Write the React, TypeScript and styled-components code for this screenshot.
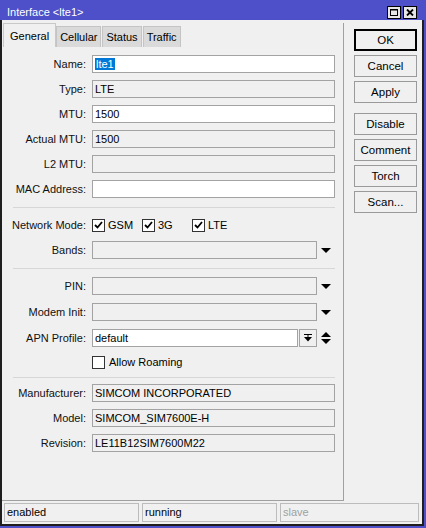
import React from "react";
import styled, { createGlobalStyle } from "styled-components";

const GlobalStyle = createGlobalStyle`
  html, body {
    margin: 0;
    padding: 0;
  }
  body {
    font-family: "Liberation Sans", Arial, sans-serif;
    font-size: 11px;
    color: #000;
    background: #f0f0f0;
  }
`;

const Window = styled.div`
  width: 426px;
  height: 528px;
  box-sizing: border-box;
  background: #4d50c8;
  padding: 0 2px 2px 0;
  display: flex;
  flex-direction: column;
`;

const TitleBar = styled.div`
  height: 20px;
  flex: none;
  display: flex;
  align-items: center;
  justify-content: space-between;
  padding: 0 7px;
  color: #fff;
  font-size: 11px;
`;

const Title = styled.span`
  padding-top: 3px;
`;

const TitleButtons = styled.div`
  display: flex;
  gap: 2px;
  align-self: flex-end;
  margin-bottom: 1px;
`;

const TitleButton = styled.div`
  width: 14px;
  height: 13px;
  box-sizing: border-box;
  border: 1px solid #000;
  background: #e6e6e6;
  display: flex;
  align-items: center;
  justify-content: center;
`;

const Body = styled.div`
  flex: 1;
  display: flex;
  flex-direction: column;
  background: #f0f0f0;
  border: 2px solid #1e1e1e;
  border-top: none;
`;

const Main = styled.div`
  flex: 1;
  display: flex;
  min-height: 0;
`;

const LeftPane = styled.div`
  width: 342px;
  flex: none;
  box-sizing: border-box;
  margin-top: 3px;
  border-right: 1px solid #a0a0a0;
  border-bottom: 1px solid #a0a0a0;
  display: flex;
  flex-direction: column;
`;

const TabStrip = styled.div`
  display: flex;
  align-items: flex-end;
  height: 24px;
  padding-left: 1px;
`;

const Tab = styled.div<{ $active?: boolean }>`
  box-sizing: border-box;
  height: ${(p) => (p.$active ? 24 : 21)}px;
  padding: 0 ${(p) => (p.$active ? 6 : 3)}px;
  display: flex;
  align-items: center;
  background: ${(p) => (p.$active ? "#f0f0f0" : "#dadada")};
  border: 1px solid ${(p) => (p.$active ? "#c8c8c8" : "#c4c4c4")};
  border-bottom: none;
  margin-right: ${(p) => (p.$active ? 0 : 1)}px;
`;

const Form = styled.div`
  display: flex;
  flex-direction: column;
  padding-top: 8px;
`;

const Section = styled.div<{ $gap: number }>`
  display: flex;
  flex-direction: column;
  gap: ${(p) => p.$gap}px;
`;

const Rule = styled.div<{ $top: number; $bottom: number }>`
  width: 322px;
  height: 1px;
  background: #d7d7d7;
  margin: ${(p) => p.$top}px 0 ${(p) => p.$bottom}px 11px;
`;

const Row = styled.div`
  display: flex;
  align-items: center;
  height: 18px;
`;

const Label = styled.div`
  width: 84px;
  flex: none;
  text-align: right;
  margin-right: 6px;
  color: #111;
`;

const Field = styled.div<{ $width: number; $editable?: boolean }>`
  width: ${(p) => p.$width}px;
  height: 18px;
  box-sizing: border-box;
  border: 1px solid #a3a3a3;
  background: ${(p) => (p.$editable ? "#fff" : "#f0f0f0")};
  padding-left: 2px;
  line-height: 16px;
  white-space: nowrap;
  overflow: hidden;
  flex: none;
`;

const Selected = styled.span`
  background: #0078d7;
  color: #fff;
  padding: 0 1px;
`;

const Arrow = styled.div`
  width: 10px;
  margin-left: 4px;
  display: flex;
  flex-direction: column;
  align-items: center;
  gap: 2px;
`;

const PickButton = styled.div`
  width: 18px;
  height: 18px;
  box-sizing: border-box;
  margin-left: 1px;
  border: 1px solid #a3a3a3;
  background: #f0f0f0;
  display: flex;
  align-items: center;
  justify-content: center;
`;

const Options = styled.div`
  display: flex;
`;

const Option = styled.div`
  width: 50px;
  display: flex;
  align-items: center;
  gap: 3px;
`;

const CheckRow = styled.div`
  display: flex;
  align-items: center;
  height: 14px;
  padding-left: 90px;
  gap: 4px;
`;

const Box = styled.div`
  width: 13px;
  height: 13px;
  box-sizing: border-box;
  border: 1px solid #333;
  background: #fff;
  display: flex;
  align-items: center;
  justify-content: center;
  flex: none;
`;

const Buttons = styled.div`
  display: flex;
  flex-direction: column;
  gap: 4px;
  padding: 9px 0 0 10px;
`;

const Button = styled.div<{ $primary?: boolean; $spaced?: boolean }>`
  width: 63px;
  height: 22px;
  box-sizing: border-box;
  border: 1px solid ${(p) => (p.$primary ? "#000" : "#9a9a9a")};
  box-shadow: ${(p) => (p.$primary ? "inset 0 0 0 1px #000" : "none")};
  background: #f0f0f0;
  display: flex;
  align-items: center;
  justify-content: center;
  font-size: 11.5px;
  margin-top: ${(p) => (p.$spaced ? 6 : 0)}px;
`;

const StatusBar = styled.div`
  display: grid;
  grid-template-columns: 135px 135px 139px;
  gap: 3px;
  padding: 2px 3px 2px 2px;
`;

const StatusCell = styled.div<{ $dim?: boolean }>`
  height: 19px;
  box-sizing: border-box;
  border: 1px solid #bcbcbc;
  padding-left: 2px;
  line-height: 17px;
  color: ${(p) => (p.$dim ? "#a0a0a0" : "#000")};
`;

const Down = () => (
  <svg width="10" height="5" viewBox="0 0 10 5">
    <path d="M0 0h10L5 5z" fill="#000" />
  </svg>
);

const Up = () => (
  <svg width="10" height="5" viewBox="0 0 10 5">
    <path d="M0 5h10L5 0z" fill="#000" />
  </svg>
);

const Check = () => (
  <svg width="9" height="8" viewBox="0 0 9 8">
    <path d="M1 4l2.5 2.5L8 1" stroke="#000" strokeWidth="1.8" fill="none" />
  </svg>
);

function CheckBox({ on }: { on?: boolean }) {
  return <Box>{on && <Check />}</Box>;
}

type FieldRow = { label: string; value?: React.ReactNode; editable?: boolean };

function TextRow({ label, value, editable }: FieldRow) {
  return (
    <Row>
      <Label>{label}:</Label>
      <Field $width={243} $editable={editable}>
        {value}
      </Field>
    </Row>
  );
}

function DropRow({ label }: { label: string }) {
  return (
    <Row>
      <Label>{label}:</Label>
      <Field $width={225} />
      <Arrow>
        <Down />
      </Arrow>
    </Row>
  );
}

export default function App() {
  return (
    <>
      <GlobalStyle />
      <Window>
        <TitleBar>
          <Title>Interface &lt;lte1&gt;</Title>
          <TitleButtons>
            <TitleButton>
              <svg width="8" height="7" viewBox="0 0 8 7">
                <rect x="0.5" y="0.5" width="7" height="6" fill="none" stroke="#000" />
                <path d="M0 1h8" stroke="#000" />
              </svg>
            </TitleButton>
            <TitleButton>
              <svg width="8" height="7" viewBox="0 0 8 7">
                <path d="M1 0.5l6 6M7 0.5l-6 6" stroke="#000" strokeWidth="1.8" />
              </svg>
            </TitleButton>
          </TitleButtons>
        </TitleBar>
        <Body>
          <Main>
            <LeftPane>
              <TabStrip>
                <Tab $active>General</Tab>
                <Tab>Cellular</Tab>
                <Tab>Status</Tab>
                <Tab>Traffic</Tab>
              </TabStrip>
              <Form>
                <Section $gap={7}>
                  <TextRow label="Name" editable value={<Selected>lte1</Selected>} />
                  <TextRow label="Type" value="LTE" />
                  <TextRow label="MTU" editable value="1500" />
                  <TextRow label="Actual MTU" value="1500" />
                  <TextRow label="L2 MTU" />
                  <TextRow label="MAC Address" editable />
                </Section>
                <Rule $top={9} $bottom={8} />
                <Section $gap={7}>
                  <Row>
                    <Label>Network Mode:</Label>
                    <Options>
                      <Option>
                        <CheckBox on />
                        GSM
                      </Option>
                      <Option>
                        <CheckBox on />
                        3G
                      </Option>
                      <Option>
                        <CheckBox on />
                        LTE
                      </Option>
                    </Options>
                  </Row>
                  <DropRow label="Bands" />
                </Section>
                <Rule $top={9} $bottom={8} />
                <Section $gap={8}>
                  <DropRow label="PIN" />
                  <DropRow label="Modem Init" />
                  <Row>
                    <Label>APN Profile:</Label>
                    <Field $width={206} $editable>
                      default
                    </Field>
                    <PickButton>
                      <svg width="8" height="8" viewBox="0 0 8 8">
                        <path d="M0 0.5h8" stroke="#000" />
                        <path d="M4 1v3" stroke="#000" />
                        <path d="M0 3h8L4 7.5z" fill="#000" />
                      </svg>
                    </PickButton>
                    <Arrow>
                      <Up />
                      <Down />
                    </Arrow>
                  </Row>
                  <CheckRow>
                    <CheckBox />
                    Allow Roaming
                  </CheckRow>
                </Section>
                <Rule $top={8} $bottom={6} />
                <Section $gap={7}>
                  <TextRow label="Manufacturer" value="SIMCOM INCORPORATED" />
                  <TextRow label="Model" value="SIMCOM_SIM7600E-H" />
                  <TextRow label="Revision" value="LE11B12SIM7600M22" />
                </Section>
              </Form>
            </LeftPane>
            <Buttons>
              <Button $primary>OK</Button>
              <Button>Cancel</Button>
              <Button>Apply</Button>
              <Button $spaced>Disable</Button>
              <Button>Comment</Button>
              <Button>Torch</Button>
              <Button>Scan...</Button>
            </Buttons>
          </Main>
          <StatusBar>
            <StatusCell>enabled</StatusCell>
            <StatusCell>running</StatusCell>
            <StatusCell $dim>slave</StatusCell>
          </StatusBar>
        </Body>
      </Window>
    </>
  );
}
